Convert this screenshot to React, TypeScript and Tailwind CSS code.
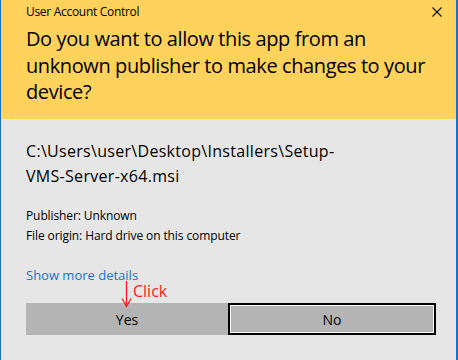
export default function App() {
  const ui = { fontFamily: '"Open Sans", "Noto Sans", sans-serif' };

  return (
    <div
      className="w-[458px] h-[360px] flex flex-col bg-[#e6e6e6] border-l border-r-2 border-[#1b6ec2] overflow-hidden"
      style={ui}
    >
      {/* yellow banner */}
      <div className="h-[119px] bg-[#ffd25b] pl-[25px] pr-[14px] pt-[3px] text-black">
        <div className="flex items-center justify-between h-[17px]">
          <span className="text-[12px] tracking-[-0.3px]">User Account Control</span>
          <svg width="10" height="10" viewBox="0 0 10 10" className="mt-[1px]">
            <path d="M0.5 0.5 L9.5 9.5 M9.5 0.5 L0.5 9.5" stroke="#111" strokeWidth="1.1" />
          </svg>
        </div>
        <h1 className="mt-[6px] text-[20px] leading-[26.5px] tracking-[-0.4px] w-[410px]">
          Do you want to allow this app from an unknown publisher to make changes to your device?
        </h1>
      </div>

      {/* details */}
      <div className="flex flex-col pl-[25px] pr-[19px]">
        <div className="mt-[20px] text-[16px] leading-[25px] tracking-[0.3px]">
          C:\Users\user\Desktop\Installers\Setup-
          <br />
          VMS-Server-x64.msi
        </div>
        <div className="mt-[17px] text-[12px] leading-[20px] tracking-[-0.1px]">
          <div>Publisher: Unknown</div>
          <div>File origin: Hard drive on this computer</div>
        </div>
        <a className="mt-[20px] text-[13px] leading-[18px] text-[#1a73d1] w-fit">
          Show more details
        </a>

        <div className="relative mt-[19px] flex">
          {/* annotation */}
          <div className="absolute left-[95px] top-[-22px] flex items-start gap-[1px] text-[#ff1a1a]">
            <svg width="11" height="27" viewBox="0 0 11 27">
              <path d="M5.5 0 V25" stroke="#ff1a1a" strokeWidth="1.3" />
              <path d="M1 17.5 L5.5 25.5 L10 17.5" fill="none" stroke="#ff1a1a" strokeWidth="1.3" />
            </svg>
            <span className="text-[16px] leading-[18px] mt-[1px]">Click</span>
          </div>

          <button className="shrink-0 w-[202px] h-[32px] bg-[#b4b4b4] text-[14px] text-black">Yes</button>
          <div className="shrink-0 w-[208px] h-[32px] border-2 border-black">
            <button className="w-full h-full bg-[#b4b4b4] border border-white text-[14px] text-black">
              No
            </button>
          </div>
        </div>
      </div>
    </div>
  );
}
